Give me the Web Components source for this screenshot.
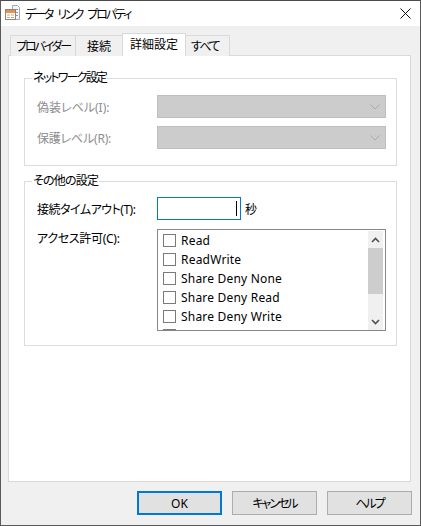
<!DOCTYPE html>
<html>
<head>
<meta charset="utf-8">
<style>
html, body { margin: 0; padding: 0; background: #f0f0f0; }
body { font: 12px "Noto Sans", "Noto Sans CJK JP", sans-serif; color: #000; font-feature-settings: "palt"; }
</style>
</head>
<body>
<template id="dialog-tpl">
    <style>
        :host {
            display: flex;
            flex-direction: column;
            box-sizing: border-box;
            width: 421px;
            height: 526px;
            background: #f0f0f0;
            border: 1px solid #5a5a5a;
            border-top-color: #4c4c4c;
        }
        .title {
            display: flex;
            align-items: center;
            flex: none;
            height: 25px;
            background: #fff;
            padding-left: 3px;
            gap: 4px;
        }
        .title span { flex: 1; font-size: 12px; letter-spacing: -2.1px; word-spacing: 4px; }
        .title svg { display: block; }
        .close { margin-right: 9px; }
        .body { flex: 1; display: flex; flex-direction: column; padding: 8px 9px 0 7px; }
        .footer { display: flex; justify-content: flex-end; gap: 10px; padding: 9px 8px 10px 0; flex: none; }
    </style>
    <div class="title">
        <svg width="17" height="17" viewBox="0 0 17 17">
            <path d="M8.500 .5h5l2 2v12h-7z" fill="#f6f6f6" stroke="#a8a8a8"/>
            <path d="M10 4.500h4M12 7.500h2M12 10.500h2" stroke="#8c9ab0"/>
            <rect x="1.500" y="4.500" width="10" height="10" fill="#fff" stroke="#8d8378"/>
            <rect x="2" y="5" width="9" height="3" fill="#e0924e"/>
            <path d="M3 10h3M7 10h3M3 12.500h3M7 12.500h3" stroke="#c9a27f"/>
        </svg>
        <span>データ リンク プロパティ</span>
        <svg class="close" width="11" height="11" viewBox="0 0 11 11"><path d="M.5 .5l10 10M10.500 .5l-10 10" stroke="#111" fill="none"/></svg>
    </div>
    <div class="body"><slot></slot></div>
    <div class="footer"><slot name="buttons"></slot></div>
</template>

<template id="tabs-tpl">
    <style>
        :host { display: flex; flex-direction: column; flex: 1; min-height: 0; }
        .strip { display: flex; align-items: flex-end; height: 22px; padding-left: 3px; flex: none; position: relative; z-index: 1; margin-bottom: -1px; }
        .panel { flex: 1; background: #fff; border: 1px solid #d9d9d9; padding: 15px 13px 0 15px; }
    </style>
    <div class="strip"><slot name="tab"></slot></div>
    <div class="panel"><slot></slot></div>
</template>

<template id="tab-tpl">
    <style>
        :host {
            display: flex; align-items: center; justify-content: center;
            box-sizing: border-box; height: 21px; margin-left: -1px;
            background: #f0f0f0; border: 1px solid #d9d9d9; border-bottom: none;
            font-size: 12px; white-space: nowrap;
        }
        :host([active]) { height: 23px; background: #fff; position: relative; z-index: 1; padding-bottom: 2px; }
    </style>
    <slot></slot>
</template>

<template id="group-tpl">
    <style>
        :host { display: block; }
        fieldset { margin: 0; border: 1px solid #dcdcdc; padding: 0; height: var(--h); box-sizing: border-box; }
        legend { margin-left: 7px; padding: 0 1px; font-size: 12px; line-height: 14px; }
        .content { padding: var(--pad, 0) 9px 0 12px; display: flex; flex-direction: column; }
    </style>
    <fieldset>
        <legend><slot name="legend"></slot></legend>
        <div class="content"><slot></slot></div>
    </fieldset>
</template>

<template id="row-tpl">
    <style>
        :host { display: flex; align-items: var(--align, center); font-size: 12px; }
        .label { flex: none; width: 120px; }
        :host([disabled]) .label { color: #8d8d8d; }
        .field { flex: 1; display: flex; align-items: center; gap: 4px; min-width: 0; }
    </style>
    <div class="label"><slot name="label"></slot></div>
    <div class="field"><slot></slot></div>
</template>

<template id="combo-tpl">
    <style>
        :host { display: flex; align-items: center; justify-content: flex-end; box-sizing: border-box; width: 229px; height: 23px; background: #ccc; border: 1px solid #bfbfbf; padding-right: 5px; }
        svg { display: block; }
    </style>
    <svg width="10" height="6" viewBox="0 0 10 6"><path d="M.5 .5l4.500 4.500 4.500-4.500" fill="none" stroke="#aaa"/></svg>
</template>

<template id="input-tpl">
    <style>
        :host { display: flex; justify-content: flex-end; align-items: center; box-sizing: border-box; width: 84px; height: 23px; background: #fff; border: 1px solid #0078d7; padding-right: 3px; }
        i { display: block; width: 1px; height: 15px; background: #000; }
    </style>
    <i></i>
</template>

<template id="checklist-tpl">
    <style>
        :host { display: flex; box-sizing: border-box; width: 229px; height: 102px; background: #fff; border: 1px solid #828790; overflow: hidden; }
        .items { flex: 1; padding: 1px 0 0 5px; min-width: 0; }
        .bar { flex: none; width: 15px; margin: 1px 2px 0 0; background: #f0f0f0; display: flex; flex-direction: column; }
        .btn { flex: none; height: 17px; display: flex; align-items: center; justify-content: center; }
        .thumb { flex: none; height: 46px; background: #cdcdcd; }
        .rest { flex: 1; }
        svg { display: block; }
    </style>
    <div class="items"><slot></slot></div>
    <div class="bar">
        <div class="btn"><svg width="9" height="6" viewBox="0 0 9 6"><path d="M1 5l3.500-3.500L8 5" fill="none" stroke="#505050" stroke-width="1.600"/></svg></div>
        <div class="thumb"></div>
        <div class="rest"></div>
        <div class="btn"><svg width="9" height="6" viewBox="0 0 9 6"><path d="M1 1l3.500 3.500L8 1" fill="none" stroke="#505050" stroke-width="1.600"/></svg></div>
    </div>
</template>

<template id="check-tpl">
    <style>
        :host { display: flex; align-items: center; gap: 5px; height: 19px; flex: none; font-size: 12px; white-space: nowrap; letter-spacing: .2px; }
        i { display: block; flex: none; box-sizing: border-box; width: 13px; height: 13px; background: #fff; border: 1px solid #7a7a7a; }
    </style>
    <i></i><slot></slot>
</template>

<template id="button-tpl">
    <style>
        :host { display: flex; align-items: center; justify-content: center; box-sizing: border-box; width: 85px; height: 24px; background: #e1e1e1; border: 1px solid #adadad; font-size: 12px; }
        :host([default]) { border: 2px solid #0078d7; }
    </style>
    <slot></slot>
</template>

<win-dialog>
    <win-tabs>
        <win-tab slot="tab" style="width:66px;letter-spacing:-2.2px">プロバイダー</win-tab>
        <win-tab slot="tab" style="width:48px">接続</win-tab>
        <win-tab slot="tab" active style="width:64px">詳細設定</win-tab>
        <win-tab slot="tab" style="width:45px;letter-spacing:-1.5px;padding-right:5px">すべて</win-tab>

        <win-group style="--h:95px;--pad:10px">
            <span slot="legend" style="letter-spacing:-1.8px">ネットワーク設定</span>
            <win-row disabled style="margin-bottom:8px"><span slot="label">偽装レベル(I):</span><win-combo></win-combo></win-row>
            <win-row disabled><span slot="label" style="letter-spacing:-.2px">保護レベル(R):</span><win-combo></win-combo></win-row>
        </win-group>

        <win-group style="--h:172px;--pad:9px;margin-top:8px">
            <span slot="legend" style="letter-spacing:-.8px">その他の設定</span>
            <win-row style="margin-bottom:9px"><span slot="label" style="letter-spacing:-.5px">接続タイムアウト(T):</span><win-input></win-input><span>秒</span></win-row>
            <win-row style="--align:flex-start">
                <span slot="label" style="letter-spacing:-.3px">アクセス許可(C):</span>
                <win-checklist>
                    <win-check>Read</win-check>
                    <win-check>ReadWrite</win-check>
                    <win-check>Share Deny None</win-check>
                    <win-check>Share Deny Read</win-check>
                    <win-check>Share Deny Write</win-check>
                    <win-check></win-check>
                </win-checklist>
            </win-row>
        </win-group>
    </win-tabs>
    <win-button slot="buttons" default>OK</win-button>
    <win-button slot="buttons" style="letter-spacing:-2px">キャンセル</win-button>
    <win-button slot="buttons" style="letter-spacing:-2px">ヘルプ</win-button>
</win-dialog>

<script>
// every element here is just a template stamped into an open shadow root
const parts = {
    'win-dialog': 'dialog-tpl',
    'win-tabs': 'tabs-tpl',
    'win-tab': 'tab-tpl',
    'win-group': 'group-tpl',
    'win-row': 'row-tpl',
    'win-combo': 'combo-tpl',
    'win-input': 'input-tpl',
    'win-checklist': 'checklist-tpl',
    'win-check': 'check-tpl',
    'win-button': 'button-tpl',
};

for (const [tag, tplId] of Object.entries(parts)) {
    customElements.define(tag, class extends HTMLElement {
        constructor() {
            super();
            const root = this.attachShadow({ mode: 'open' });
            root.appendChild(document.getElementById(tplId).content.cloneNode(true));
        }
    });
}
</script>
</body>
</html>
